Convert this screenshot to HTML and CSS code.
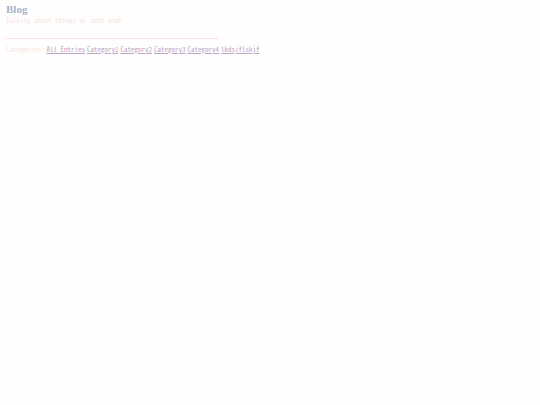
FILE: index.html
```html
<!DOCTYPE html>
<html lang="en">
<head>
  <meta charset="UTF-8" />
  <meta name="viewport" content="width=device-width, initial-scale=1" />
  <title>Blog</title>
  <link rel="stylesheet" href="styles.css">
</head>
<body>

  <header>
    <h1>Blog</h1>
    <p class="tagline">Talking about things or smth yeah</p>
  </header>

  <hr class="divider">

  <nav class="categories">
    <span>Categories:</span>
    <a href="#">All Entries</a>
    <a href="#">Category1</a>
    <a href="#">Category2</a>
    <a href="#">Category3</a>
    <a href="#">Category4</a>
    <a href="#">lkdsjflskjf</a>
  </nav>

</body>
</html>
```
FILE: styles.css
```css
body {
  margin: 0;
  padding: 3px 6px;
  background: #fefefe;
  color: #f5e6dd;
  font-family: "Noto Sans Mono CJK JP", "Liberation Mono", monospace;
  font-size: 7px;
  line-height: 8px;
}
h1 {
  margin: 0;
  color: #a5b5c6;
  font-family: "Liberation Serif", serif;
  font-size: 11px;
  line-height: 13px;
}
.tagline {
  margin: 0;
}
.divider {
  width: 40%;
  margin: 14px 0 6px;
  border: 0;
  border-top: 1px dotted #e8ccd2;
}
.categories {
  display: flex;
  flex-wrap: wrap;
  gap: 2px;
}
.categories a {
  color: #bda3c4;
}
```
